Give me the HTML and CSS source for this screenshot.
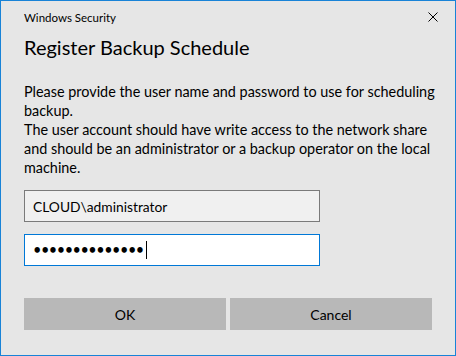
FILE: index.html
```html
<!DOCTYPE html>
<html>
<head>
    <link rel="stylesheet" href="styles.css">
</head>
<body>
    <div class="dialog">
        <div class="titlebar">
            <span class="title">Windows Security</span>
            <svg class="close" width="10" height="10" viewBox="0 0 10 10">
                <path d="M0.5 0.5 L9.5 9.5 M9.5 0.5 L0.5 9.5" stroke="#000" stroke-width="1" fill="none"/>
            </svg>
        </div>
        <div class="content">
            <h1 class="heading">Register Backup Schedule</h1>
            <p class="message">Please provide the user name and password to use for scheduling backup.<br>The user account should have write access to the network share and should be an administrator or a backup operator on the local machine.</p>
            <div class="field user">CLOUD\administrator</div>
            <div class="field password"><span class="dots">••••••••••••••</span><span class="caret"></span></div>
            <div class="buttons">
                <button class="btn">OK</button>
                <button class="btn">Cancel</button>
            </div>
        </div>
    </div>
</body>
</html>
```

FILE: styles.css
```css
body {
    margin: 0;
    padding: 0;
    font-family: "Lato", "Noto Sans", sans-serif;
}

.dialog {
    width: 456px;
    height: 356px;
    box-sizing: border-box;
    border: 1px solid #1883d7;
    background-color: #e6e6e6;
    color: #000;
}

.titlebar {
    display: flex;
    align-items: center;
    justify-content: space-between;
    height: 32px;
    padding: 0 17px 0 23px;
}

.title {
    font-size: 11.5px;
}

.content {
    padding: 0 23px;
}

.heading {
    margin: 0;
    font-size: 20px;
    font-weight: normal;
    line-height: 28px;
}

.message {
    margin: 21px -6px 0 0;
    font-size: 14.4px;
    line-height: 19px;
}

.field {
    box-sizing: border-box;
    width: 296px;
    height: 32px;
    border: 1px solid #7a7a7a;
    background-color: #f0f0f0;
    font-size: 13.8px;
    padding: 0 8px;
    display: flex;
    align-items: center;
}

.user {
    margin-top: 13px;
}

.password {
    margin-top: 12px;
    border-color: #0078d7;
    background-color: #fff;
}

.dots {
    font-size: 14.5px;
    letter-spacing: -0.5px;
    line-height: 1;
}

.caret {
    width: 1px;
    height: 18px;
    background-color: #000;
    margin-left: 2px;
}

.buttons {
    display: grid;
    grid-template-columns: 1fr 1fr;
    gap: 4px;
    margin-top: 32px;
}

.btn {
    height: 32px;
    border: none;
    background-color: #b8b8b8;
    font-family: inherit;
    font-size: 14px;
    color: #000;
    padding: 0;
}
```
